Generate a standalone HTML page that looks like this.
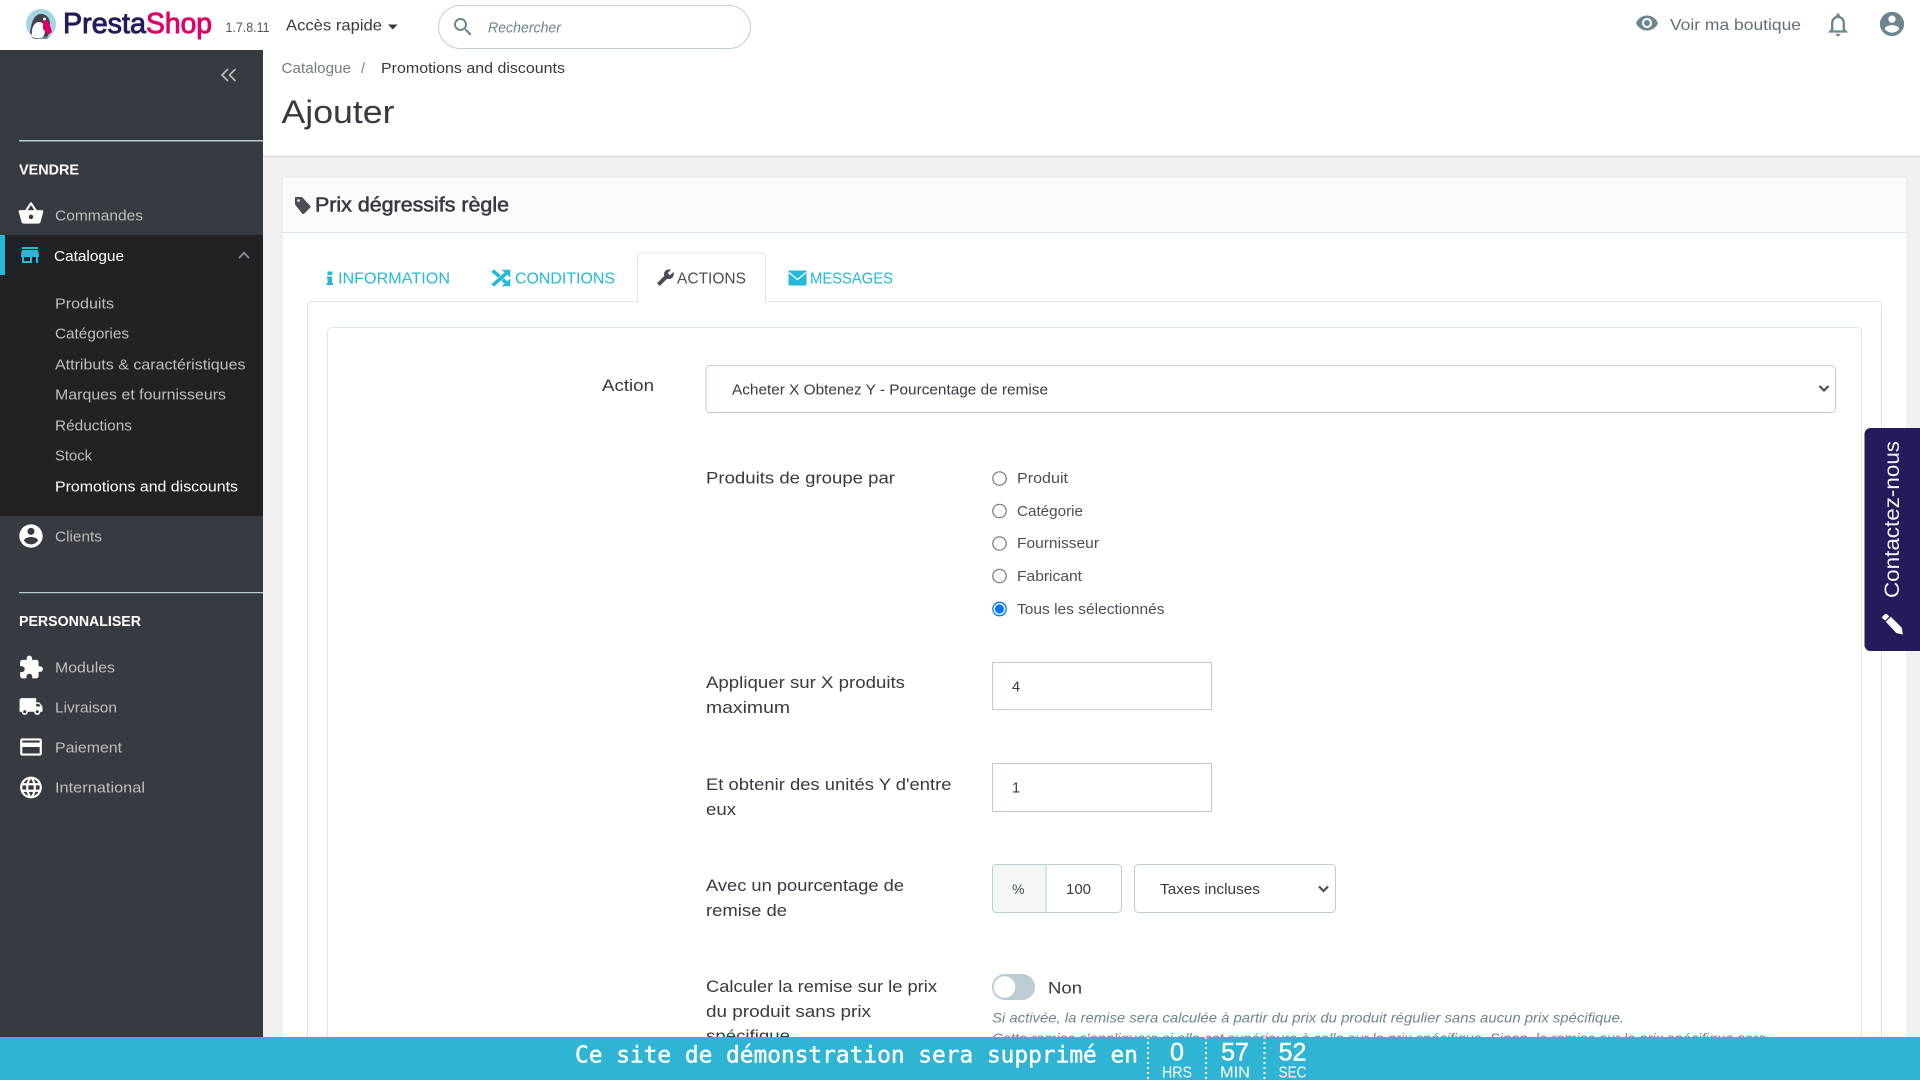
<!DOCTYPE html>
<html lang="fr">
<head>
<meta charset="utf-8">
<title>PrestaShop - Ajouter</title>
<style>
html,body{margin:0;padding:0;width:1920px;height:1080px;overflow:hidden;background:#eff1f2}
svg{display:block}
text{font-family:"Liberation Sans",sans-serif;white-space:pre}
.s{font-size:14.5px;fill:#bebebe}
.f{font-size:16.4px;fill:#363a41}
.r{font-size:15px;fill:#4a4f57}
.t{font-size:15.8px;fill:#25b9d7}
.m{font-size:14.5px;fill:#363a41}
.h{font-size:14px;fill:#6c868e;font-style:italic}
.b{font-size:14.5px;font-weight:bold;fill:#fff}
</style>
</head>
<body>
<svg width="1920" height="1080" viewBox="0 0 1920 1080" xmlns="http://www.w3.org/2000/svg">
<rect width="1920" height="1080" fill="#eff1f2"/>

<!-- top header -->
<rect width="1920" height="50" fill="#fff"/>
<rect x="263" y="50" width="1657" height="106" fill="#fff"/>
<rect x="263" y="155.500" width="1657" height="2" fill="#dfe3e5"/>

<!-- logo -->
<circle cx="41" cy="24" r="15" fill="#a3d5e4"/>
<path d="M30 33c1-10 4-19 11-19 6 0 9 5 9 10l-2 12c-5 3-13 2-18-3z" fill="#3f4248"/>
<path d="M32 35c-1-6 2-13 7-13 4 0 7 5 6 10-1 5-3 7-6 7-3 0-6-1-7-4z" fill="#fff"/>
<path d="M43 19l6 3 3 10-4 3-5-6z" fill="#df0067"/>
<circle cx="44.500" cy="19" r="1.400" fill="#fff"/>
<path d="M30 36c5 3 16 3 21-1l-4 4H34z" fill="#7c7f86"/>
<text x="63" y="33" font-size="29" stroke="#251b5b" stroke-width=".9" fill="#251b5b" textLength="83" lengthAdjust="spacingAndGlyphs">Presta</text>
<text x="146" y="33" font-size="29" stroke="#df0067" stroke-width=".9" fill="#df0067" textLength="66" lengthAdjust="spacingAndGlyphs">Shop</text>
<text x="225.500" y="32" font-size="13.600" fill="#4a5a60" textLength="44" lengthAdjust="spacingAndGlyphs">1.7.8.11</text>
<text x="286" y="30.500" font-size="16" fill="#363a41" textLength="96" lengthAdjust="spacingAndGlyphs">Accès rapide</text>
<path d="M388 24.500h9.500l-4.750 5z" fill="#363a41"/>

<!-- search -->
<rect x="438.500" y="5.500" width="312" height="43" rx="21.500" fill="#fff" stroke="#bbcdd2"/>
<svg x="451" y="15" width="24" height="24" viewBox="0 0 24 24"><path fill="#6c868e" d="M15.500 14h-.79l-.28-.27C15.410 12.590 16 11.110 16 9.500 16 5.910 13.090 3 9.500 3S3 5.910 3 9.500 5.910 16 9.500 16c1.610 0 3.090-.59 4.230-1.570l.27.28v.79l5 4.990L20.490 19l-4.990-5zm-6 0C7.010 14 5 11.990 5 9.500S7.010 5 9.500 5 14 7.010 14 9.500 11.990 14 9.500 14z"/></svg>
<text x="488" y="32.500" font-size="15" font-style="italic" fill="#6c868e" textLength="73" lengthAdjust="spacingAndGlyphs">Rechercher</text>

<!-- header right -->
<svg x="1635" y="11" width="24" height="24" viewBox="0 0 24 24"><path fill="#6c868e" d="M12 4.500C7 4.500 2.730 7.610 1 12c1.730 4.390 6 7.500 11 7.500s9.270-3.110 11-7.500c-1.730-4.390-6-7.500-11-7.500zM12 17c-2.760 0-5-2.240-5-5s2.240-5 5-5 5 2.240 5 5-2.240 5-5 5zm0-8c-1.660 0-3 1.340-3 3s1.340 3 3 3 3-1.340 3-3-1.340-3-3-3z"/></svg>
<text x="1670" y="30" font-size="16" fill="#5f717a" textLength="131" lengthAdjust="spacingAndGlyphs">Voir ma boutique</text>
<svg x="1824" y="10.500" width="28" height="28" viewBox="0 0 24 24"><path fill="#6c868e" d="M12 22c1.100 0 2-.9 2-2h-4c0 1.100.9 2 2 2zm6-6v-5c0-3.070-1.630-5.640-4.500-6.320V4c0-.83-.67-1.500-1.500-1.500s-1.500.67-1.500 1.500v.68C7.640 5.360 6 7.920 6 11v5l-2 2v1h16v-1l-2-2zm-2 1H8v-6c0-2.480 1.510-4.500 4-4.500s4 2.020 4 4.500v6z"/></svg>
<svg x="1877.500" y="9.500" width="29" height="29" viewBox="0 0 24 24"><path fill="#6c868e" d="M12 2C6.480 2 2 6.480 2 12s4.480 10 10 10 10-4.480 10-10S17.520 2 12 2zm0 3c1.660 0 3 1.340 3 3s-1.340 3-3 3-3-1.340-3-3 1.340-3 3-3zm0 14.200c-2.500 0-4.710-1.280-6-3.220.03-1.990 4-3.080 6-3.080 1.990 0 5.970 1.090 6 3.080-1.290 1.940-3.500 3.220-6 3.220z"/></svg>

<!-- breadcrumb + title -->
<text x="281.500" y="73" font-size="14.500" fill="#727d82" textLength="69.500" lengthAdjust="spacingAndGlyphs">Catalogue</text>
<text x="361" y="73" font-size="14.500" fill="#6c868e">/</text>
<text x="381" y="73" class="m" textLength="184" lengthAdjust="spacingAndGlyphs">Promotions and discounts</text>
<text x="281.500" y="123" font-size="32" fill="#363a41" textLength="113" lengthAdjust="spacingAndGlyphs">Ajouter</text>

<!-- panel -->
<rect x="282" y="177" width="1625" height="903" fill="#fff" stroke="#e4eaec"/>
<rect x="282.500" y="177.500" width="1624" height="55" fill="#fafbfc"/>
<rect x="282" y="232" width="1625" height="1" fill="#dbe6e9"/>
<path d="M295 197h7l8 8.500c.7.700.7 1.700 0 2.400l-5.600 5.600c-.7.700-1.700.700-2.400 0L295 204.500z" fill="#4a4f57"/>
<circle cx="298.500" cy="200.500" r="1.300" fill="#fafbfc"/>
<text x="315" y="211.500" font-size="20" fill="#363a41" stroke="#363a41" stroke-width=".55" textLength="194" lengthAdjust="spacingAndGlyphs">Prix dégressifs règle</text>

<!-- tabs -->
<rect x="307.500" y="301.500" width="1574" height="800" rx="4" fill="#fff" stroke="#dbe6e9"/>
<path d="M637.500 302v-45a4 4 0 0 1 4-4h120a4 4 0 0 1 4 4v45" fill="#fff" stroke="#dbe6e9"/>
<rect x="638" y="300" width="127" height="4" fill="#fff"/>

<path d="M327.500 271.500h5v3.500h-5zM327 276.500h5v6.500h1v2h-6.500v-2h1v-4.500h-.5z" fill="#25b9d7"/>
<text x="338" y="283.500" class="t" textLength="112" lengthAdjust="spacingAndGlyphs">INFORMATION</text>
<svg x="491.500" y="269.500" width="19" height="17" viewBox="3 3 18 18" preserveAspectRatio="none"><path fill="#25b9d7" stroke="#25b9d7" stroke-width="1.600" d="M10.590 9.170L5.410 4 4 5.410l5.170 5.170 1.420-1.410zM14.500 4l2.040 2.040L4 18.590 5.410 20 17.960 7.460 20 9.500V4h-5.500zm.33 9.410l-1.410 1.410 3.130 3.130L14.500 20H20v-5.500l-2.040 2.040-3.130-3.130z"/></svg>
<text x="515" y="283.500" class="t" textLength="100" lengthAdjust="spacingAndGlyphs">CONDITIONS</text>
<svg x="656.500" y="268.500" width="18" height="18" viewBox="0 0 24 24"><g transform="translate(24 0) scale(-1 1)"><path fill="#4a4f57" d="M22.700 19l-9.100-9.100c.9-2.300.4-5-1.500-6.900-2-2-5-2.400-7.400-1.300L9 6 6 9 1.600 4.700C.4 7.100.9 10.100 2.900 12.100c1.900 1.900 4.600 2.400 6.900 1.500l9.100 9.100c.4.400 1 .4 1.400 0l2.300-2.300c.5-.4.5-1.100.1-1.400z"/></g></svg>
<text x="677" y="283.500" class="t" style="fill:#4a4f57" textLength="69" lengthAdjust="spacingAndGlyphs">ACTIONS</text>
<rect x="788.500" y="270.500" width="18" height="15" rx="1" fill="#25b9d7"/>
<path d="M789 272.500l8.500 7 8.500-7" fill="none" stroke="#fff" stroke-width="1.300"/>
<text x="810" y="283.500" class="t" textLength="83" lengthAdjust="spacingAndGlyphs">MESSAGES</text>

<!-- inner card -->
<rect x="327.500" y="327.500" width="1534" height="800" rx="4" fill="#fff" stroke="#dbe6e9"/>

<!-- Action -->
<text x="602" y="391" class="f" textLength="52" lengthAdjust="spacingAndGlyphs">Action</text>
<rect x="706" y="365.500" width="1129.500" height="47" rx="4" fill="#fff" stroke="#bbcdd2"/>
<text x="732" y="394.500" font-size="14.500" fill="#363a41" textLength="316" lengthAdjust="spacingAndGlyphs">Acheter X Obtenez Y - Pourcentage de remise</text>
<path d="M1819.500 386l4.500 4.500 4.500-4.500" fill="none" stroke="#4a4f57" stroke-width="2.200"/>

<!-- group by -->
<text x="706" y="483.500" class="f" textLength="189" lengthAdjust="spacingAndGlyphs">Produits de groupe par</text>
<g fill="#fff" stroke="#767676" stroke-width="1.200">
<circle cx="999.500" cy="478.500" r="6.700"/>
<circle cx="999.500" cy="511" r="6.700"/>
<circle cx="999.500" cy="543.500" r="6.700"/>
<circle cx="999.500" cy="576" r="6.700"/>
</g>
<circle cx="999.500" cy="609" r="6.700" fill="#fff" stroke="#0075ff" stroke-width="1.300"/>
<circle cx="999.500" cy="609" r="4.600" fill="#0075ff"/>
<text x="1017" y="483" class="r" textLength="51" lengthAdjust="spacingAndGlyphs">Produit</text>
<text x="1017" y="516" class="r" textLength="66" lengthAdjust="spacingAndGlyphs">Catégorie</text>
<text x="1017" y="548" class="r" textLength="82" lengthAdjust="spacingAndGlyphs">Fournisseur</text>
<text x="1017" y="581" class="r" textLength="65" lengthAdjust="spacingAndGlyphs">Fabricant</text>
<text x="1017" y="614" class="r" textLength="147.500" lengthAdjust="spacingAndGlyphs">Tous les sélectionnés</text>

<!-- X max -->
<text x="706" y="688" class="f" textLength="199" lengthAdjust="spacingAndGlyphs">Appliquer sur X produits</text>
<text x="706" y="713" class="f" textLength="84" lengthAdjust="spacingAndGlyphs">maximum</text>
<rect x="992.500" y="662.500" width="219" height="47" fill="#fff" stroke="#bbcdd2"/>
<text x="1012" y="691.500" font-size="14.500" fill="#363a41">4</text>

<!-- Y -->
<text x="706" y="790" class="f" textLength="245.500" lengthAdjust="spacingAndGlyphs">Et obtenir des unités Y d'entre</text>
<text x="706" y="815" class="f" textLength="30" lengthAdjust="spacingAndGlyphs">eux</text>
<rect x="992.500" y="763.500" width="219" height="48" fill="#fff" stroke="#bbcdd2"/>
<text x="1012" y="792.500" font-size="14.500" fill="#363a41">1</text>

<!-- percent -->
<text x="706" y="891" class="f" textLength="198" lengthAdjust="spacingAndGlyphs">Avec un pourcentage de</text>
<text x="706" y="916" class="f" textLength="81" lengthAdjust="spacingAndGlyphs">remise de</text>
<rect x="992.500" y="864.500" width="129" height="48" rx="4" fill="#fff" stroke="#bbcdd2"/>
<path d="M1046 864.500h-49.500a4 4 0 0 0-4 4v40a4 4 0 0 0 4 4h49.500z" fill="#f4f7f8" stroke="#bbcdd2"/>
<text x="1012" y="894" font-size="14" fill="#4a4f57" textLength="12.500" lengthAdjust="spacingAndGlyphs">%</text>
<text x="1066" y="894" font-size="15" fill="#363a41" textLength="25" lengthAdjust="spacingAndGlyphs">100</text>
<rect x="1134.500" y="864.500" width="201" height="48" rx="4" fill="#fff" stroke="#bbcdd2"/>
<text x="1160" y="894" font-size="14.500" fill="#363a41" textLength="100" lengthAdjust="spacingAndGlyphs">Taxes incluses</text>
<path d="M1319 886.500l4.500 4.500 4.500-4.500" fill="none" stroke="#4a4f57" stroke-width="2.200"/>

<!-- toggle -->
<text x="706" y="992" class="f" textLength="231" lengthAdjust="spacingAndGlyphs">Calculer la remise sur le prix</text>
<text x="706" y="1017" class="f" textLength="165" lengthAdjust="spacingAndGlyphs">du produit sans prix</text>
<text x="706" y="1041.500" class="f" textLength="84" lengthAdjust="spacingAndGlyphs">spécifique</text>
<rect x="992" y="974" width="43" height="26" rx="13" fill="#bbcdd2"/>
<circle cx="1004.500" cy="987" r="11.500" fill="#fff" stroke="#bbcdd2" stroke-width="1.500"/>
<text x="1048" y="993.500" font-size="17" fill="#363a41" textLength="34" lengthAdjust="spacingAndGlyphs">Non</text>
<text x="992" y="1022.500" class="h" textLength="632" lengthAdjust="spacingAndGlyphs">Si activée, la remise sera calculée à partir du prix du produit régulier sans aucun prix spécifique.</text>
<text x="992" y="1043" class="h" textLength="774" lengthAdjust="spacingAndGlyphs">Cette remise s'appliquera si elle est supérieure à celle sur le prix spécifique. Sinon, la remise sur le prix spécifique sera</text>

<!-- contact -->
<path d="M1920 428h-49.500a6 6 0 0 0-6 6v211a6 6 0 0 0 6 6h49.500z" fill="#251b5b"/>
<text transform="translate(1899 598) rotate(-90)" font-size="21" fill="#f4f3f8" textLength="157" lengthAdjust="spacingAndGlyphs">Contactez-nous</text>
<g transform="translate(-2 1)"><path d="M1884.500 615.500l2-2a2 2 0 0 1 2.800 0l2 2-4 4-2.800-2a1.400 1.400 0 0 1 0-2zM1887.800 620.700l5-5 11 11 1 6.800-6.500-1.500z" fill="#fff"/></g>

<!-- sidebar -->
<rect x="0" y="50" width="263" height="990" fill="#363a41"/>
<path d="M228 69l-6 6 6 6M235.500 69l-6 6 6 6" fill="none" stroke="#bebebe" stroke-width="1.600"/>
<rect x="19" y="140" width="244" height="1.500" fill="#bbcdd2"/>
<text x="19" y="174.500" class="b" textLength="60" lengthAdjust="spacingAndGlyphs">VENDRE</text>
<svg x="17" y="200" width="28" height="27" viewBox="0 0 24 24"><path fill="#fff" d="M17.210 9l-4.380-6.560c-.19-.28-.51-.42-.83-.42-.32 0-.64.14-.83.43L6.790 9H2c-.55 0-1 .45-1 1 0 .09.01.18.04.27l2.540 9.270c.23.84 1 1.460 1.920 1.460h13c.92 0 1.690-.62 1.930-1.460l2.540-9.270L23 10c0-.55-.45-1-1-1h-4.790zM9 9l3-4.400L15 9H9zm3 8c-1.100 0-2-.9-2-2s.9-2 2-2 2 .9 2 2-.9 2-2 2z"/></svg>
<text x="55" y="220.500" class="s" textLength="88" lengthAdjust="spacingAndGlyphs">Commandes</text>

<rect x="0" y="235" width="263" height="281" fill="#202226"/>
<rect x="0" y="235" width="5" height="40" fill="#25b9d7"/>
<svg x="18" y="243" width="24" height="24" viewBox="0 0 24 24"><path fill="#25b9d7" d="M20 4H4v2h16V4zm1 10v-2l-1-5H4l-1 5v2h1v6h10v-6h4v6h2v-6h1zm-9 4H6v-4h6v4z"/></svg>
<text x="54" y="261" class="s" style="fill:#fff" textLength="70" lengthAdjust="spacingAndGlyphs">Catalogue</text>
<path d="M239 258l5-5.200 5 5.200" fill="none" stroke="#8a8d92" stroke-width="1.800"/>
<text x="55" y="308.500" class="s" textLength="59" lengthAdjust="spacingAndGlyphs">Produits</text>
<text x="55" y="338.500" class="s" textLength="74" lengthAdjust="spacingAndGlyphs">Catégories</text>
<text x="55" y="369.500" class="s" textLength="190.500" lengthAdjust="spacingAndGlyphs">Attributs &amp; caractéristiques</text>
<text x="55" y="399.500" class="s" textLength="171" lengthAdjust="spacingAndGlyphs">Marques et fournisseurs</text>
<text x="55" y="430.500" class="s" textLength="77" lengthAdjust="spacingAndGlyphs">Réductions</text>
<text x="55" y="460.500" class="s" textLength="37" lengthAdjust="spacingAndGlyphs">Stock</text>
<text x="55" y="491.500" class="s" style="fill:#fff" textLength="183" lengthAdjust="spacingAndGlyphs">Promotions and discounts</text>

<svg x="17" y="522" width="28" height="28" viewBox="0 0 24 24"><path fill="#fff" d="M12 2C6.480 2 2 6.480 2 12s4.480 10 10 10 10-4.480 10-10S17.520 2 12 2zm0 3c1.660 0 3 1.340 3 3s-1.340 3-3 3-3-1.340-3-3 1.340-3 3-3zm0 14.200c-2.500 0-4.710-1.280-6-3.220.03-1.990 4-3.080 6-3.080 1.990 0 5.970 1.090 6 3.080-1.290 1.940-3.500 3.220-6 3.220z"/></svg>
<text x="55" y="541.500" class="s" textLength="47" lengthAdjust="spacingAndGlyphs">Clients</text>
<rect x="19" y="592" width="244" height="1.200" fill="#bbcdd2"/>
<text x="19" y="626" class="b" textLength="122" lengthAdjust="spacingAndGlyphs">PERSONNALISER</text>

<svg x="18" y="654.500" width="26" height="26" viewBox="0 0 24 24"><path fill="#fff" d="M20.500 11H19V7c0-1.100-.9-2-2-2h-4V3.500C13 2.120 11.880 1 10.500 1S8 2.120 8 3.500V5H4c-1.100 0-1.990.9-1.990 2v3.800H3.500c1.490 0 2.700 1.210 2.700 2.700s-1.210 2.700-2.700 2.700H2V20c0 1.100.9 2 2 2h3.800v-1.500c0-1.490 1.210-2.700 2.700-2.700 1.490 0 2.700 1.210 2.700 2.700V22H17c1.100 0 2-.9 2-2v-4h1.500c1.380 0 2.500-1.120 2.500-2.500S21.880 11 20.500 11z"/></svg>
<text x="55" y="672.500" class="s" textLength="60" lengthAdjust="spacingAndGlyphs">Modules</text>
<svg x="18.500" y="694" width="25" height="25" viewBox="0 0 24 24"><path fill="#fff" d="M20 8h-3V4H3c-1.100 0-2 .9-2 2v11h2c0 1.660 1.340 3 3 3s3-1.340 3-3h6c0 1.660 1.340 3 3 3s3-1.340 3-3h2v-5l-3-4zM6 18.500c-.83 0-1.500-.67-1.500-1.500s.67-1.500 1.500-1.500 1.500.67 1.500 1.500-.67 1.500-1.500 1.500zm13.500-9l1.960 2.500H17V9.500h2.500zm-1.500 9c-.83 0-1.500-.67-1.500-1.500s.67-1.500 1.500-1.500 1.500.67 1.500 1.500-.67 1.500-1.500 1.500z"/></svg>
<text x="55" y="712.500" class="s" textLength="62" lengthAdjust="spacingAndGlyphs">Livraison</text>
<svg x="18" y="734" width="26" height="26" viewBox="0 0 24 24"><path fill="#fff" d="M20 4H4c-1.110 0-1.990.89-1.990 2L2 18c0 1.110.89 2 2 2h16c1.110 0 2-.89 2-2V6c0-1.110-.89-2-2-2zm0 14H4v-6h16v6zm0-10H4V6h16v2z"/></svg>
<text x="55" y="752.500" class="s" textLength="67" lengthAdjust="spacingAndGlyphs">Paiement</text>
<svg x="18" y="774.500" width="26" height="26" viewBox="0 0 24 24"><path fill="#fff" d="M11.990 2C6.470 2 2 6.480 2 12s4.470 10 9.990 10C17.520 22 22 17.520 22 12S17.520 2 11.990 2zm6.930 6h-2.950c-.32-1.250-.78-2.450-1.380-3.560 1.840.63 3.370 1.910 4.330 3.560zM12 4.040c.83 1.200 1.480 2.530 1.910 3.960h-3.820c.43-1.430 1.080-2.760 1.910-3.960zM4.260 14C4.100 13.360 4 12.690 4 12s.1-1.360.26-2h3.380c-.08.66-.14 1.320-.14 2 0 .68.06 1.340.14 2H4.260zm.82 2h2.950c.32 1.250.78 2.450 1.380 3.560-1.840-.63-3.370-1.900-4.330-3.560zm2.950-8H5.080c.96-1.660 2.490-2.930 4.330-3.560C8.810 5.550 8.350 6.750 8.030 8zM12 19.960c-.83-1.200-1.480-2.530-1.910-3.960h3.820c-.43 1.430-1.080 2.760-1.910 3.960zM14.340 14H9.660c-.09-.66-.16-1.320-.16-2 0-.68.07-1.350.16-2h4.680c.09.65.16 1.320.16 2 0 .68-.07 1.340-.16 2zm.25 5.560c.6-1.110 1.060-2.310 1.380-3.560h2.950c-.96 1.650-2.490 2.930-4.330 3.560zM16.360 14c.08-.66.14-1.320.14-2 0-.68-.06-1.340-.14-2h3.380c.16.64.26 1.310.26 2s-.1 1.360-.26 2h-3.380z"/></svg>
<text x="55" y="792.500" class="s" textLength="90" lengthAdjust="spacingAndGlyphs">International</text>

<!-- demo banner -->
<rect x="0" y="1037" width="1920" height="43" fill="#2fb4d3"/>
<text x="575" y="1062.500" font-size="22.800" style="font-family:'DejaVu Sans Mono','Liberation Mono',monospace" fill="#fff" stroke="#fff" stroke-width=".45" textLength="563" lengthAdjust="spacingAndGlyphs">Ce site de démonstration sera supprimé en</text>
<g stroke="#fff" stroke-width="2" stroke-dasharray="2 3">
<path d="M1148 1037v43M1206 1037v43M1264.500 1037v43"/>
</g>
<g fill="#fff" text-anchor="middle">
<text x="1177" y="1060.500" font-size="25" stroke="#fff" stroke-width=".5">0</text>
<text x="1235" y="1060.500" font-size="25" stroke="#fff" stroke-width=".5">57</text>
<text x="1292.500" y="1060.500" font-size="25" stroke="#fff" stroke-width=".5">52</text>
<text x="1177" y="1077.500" font-size="16" textLength="30" lengthAdjust="spacingAndGlyphs">HRS</text>
<text x="1235" y="1077.500" font-size="16" textLength="30" lengthAdjust="spacingAndGlyphs">MIN</text>
<text x="1292.500" y="1077.500" font-size="16" textLength="28" lengthAdjust="spacingAndGlyphs">SEC</text>
</g>
</svg>
</body>
</html>
